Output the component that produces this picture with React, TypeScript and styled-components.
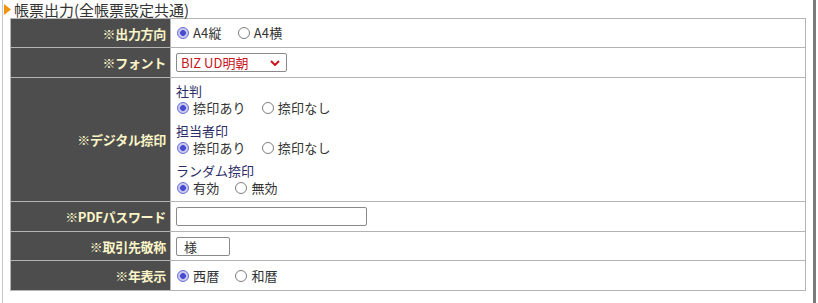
import React from "react";
import styled, { createGlobalStyle } from "styled-components";

const Global = createGlobalStyle`
  html, body { margin: 0; padding: 0; background: #ffffff; }
  body { font-family: "Noto Sans CJK JP", "Noto Sans", sans-serif; color: #333; overflow: hidden; }
`;

const Frame = styled.div`
  margin-left: 2px;
  width: 810px;
  height: 303px;
  border-left: 1px solid #c8c8c8;
  border-right: 3px solid #7a7a7a;
  box-sizing: content-box;
  overflow: hidden;
`;

const Heading = styled.div`
  display: flex;
  align-items: flex-start;
  gap: 3px;
  height: 18px;
  box-sizing: border-box;
  padding: 2px 0 0 1px;
  font-size: 15px;
  line-height: 16px;
  color: #333;
  white-space: nowrap;
`;

const Arrow = styled.svg`
  flex: none;
  width: 7px;
  height: 11px;
  display: block;
  margin-top: 2px;
`;

const Table = styled.div`
  margin-left: 7px;
  width: 796px;
  border: 1px solid #b4b4b4;
  box-sizing: border-box;
  display: flex;
  flex-direction: column;
`;

const Row = styled.div<{ $h: number; $first?: boolean }>`
  display: grid;
  grid-template-columns: 160px 1fr;
  height: ${(p) => p.$h}px;
  box-sizing: border-box;
  border-top: ${(p) => (p.$first ? "none" : "1px solid #b4b4b4")};
`;

const Label = styled.div`
  background: #4d4d4d;
  color: #fbf5c8;
  font-weight: bold;
  font-size: 13px;
  display: flex;
  align-items: center;
  justify-content: flex-end;
  padding-right: 4px;
  border-right: 1px solid #b4b4b4;
  letter-spacing: -0.3px;
`;

const Value = styled.div`
  display: flex;
  flex-direction: column;
  justify-content: center;
  padding-left: 5px;
  font-size: 13px;
`;

const RadioLine = styled.div`
  display: flex;
  align-items: center;
  gap: 15px;
  height: 17px;
`;

const Choice = styled.label`
  display: flex;
  align-items: center;
  gap: 4px;
  color: #333;
  font-size: 13px;
  line-height: 16px;
  letter-spacing: 0.2px;
`;

const Radio = styled.input.attrs({ type: "radio" })`
  appearance: none;
  -webkit-appearance: none;
  margin: 0 0 0 1px;
  width: 12px;
  height: 12px;
  border-radius: 50%;
  border: 1px solid #7d7d7d;
  background: #fff;
  box-sizing: border-box;
  &:checked {
    border-color: #6a6ad8;
    background: radial-gradient(circle, #4b4bd0 0 2.6px, #c9c9f2 3.2px 100%);
  }
`;

const GroupTitle = styled.div`
  color: #2c2c66;
  font-size: 13px;
  line-height: 16px;
  height: 17px;
`;

const Group = styled.div`
  display: flex;
  flex-direction: column;
  & + & {
    margin-top: 6px;
  }
`;

const Select = styled.select`
  appearance: none;
  -webkit-appearance: none;
  width: 111px;
  height: 19px;
  border: 1px solid #8a8a8a;
  border-radius: 2px;
  padding: 0 0 0 4px;
  font-family: inherit;
  font-size: 13px;
  color: #c8161d;
  background: #fff
    url("data:image/svg+xml;utf8,<svg xmlns='http://www.w3.org/2000/svg' width='10' height='6'><path d='M1 1l4 4 4-4' fill='none' stroke='%23c8161d' stroke-width='2'/></svg>")
    no-repeat right 6px center;
  line-height: 17px;
`;

const TextBox = styled.input<{ $w: number }>`
  width: ${(p) => p.$w}px;
  height: 19px;
  box-sizing: border-box;
  border: 1px solid #8a8a8a;
  border-radius: 2px;
  padding: 0 0 0 7px;
  font-family: inherit;
  font-size: 13px;
  color: #333;
  outline: none;
`;

const NextHeading = styled(Heading)`
  margin-top: 9px;
`;

type Opt = { label: string; checked?: boolean };

const Radios: React.FC<{ name: string; options: Opt[] }> = ({ name, options }) => (
  <RadioLine>
    {options.map((o) => (
      <Choice key={o.label}>
        <Radio name={name} defaultChecked={o.checked} />
        {o.label}
      </Choice>
    ))}
  </RadioLine>
);

const Tri = () => (
  <Arrow viewBox="0 0 7 11">
    <path d="M0 0L7 5.5L0 11Z" fill="#f0920c" />
  </Arrow>
);

export default function App() {
  return (
    <>
      <Global />
      <Frame>
        <Heading>
          <Tri />
          帳票出力(全帳票設定共通)
        </Heading>
        <Table>
          <Row $h={28} $first>
            <Label>※出力方向</Label>
            <Value>
              <Radios name="dir" options={[{ label: "A4縦", checked: true }, { label: "A4横" }]} />
            </Value>
          </Row>
          <Row $h={30}>
            <Label>※フォント</Label>
            <Value>
              <Select defaultValue="biz">
                <option value="biz">BIZ UD明朝</option>
                <option value="goth">BIZ UDゴシック</option>
              </Select>
            </Value>
          </Row>
          <Row $h={124}>
            <Label>※デジタル捺印</Label>
            <Value>
              <Group>
                <GroupTitle>社判</GroupTitle>
                <Radios name="s1" options={[{ label: "捺印あり", checked: true }, { label: "捺印なし" }]} />
              </Group>
              <Group>
                <GroupTitle>担当者印</GroupTitle>
                <Radios name="s2" options={[{ label: "捺印あり", checked: true }, { label: "捺印なし" }]} />
              </Group>
              <Group>
                <GroupTitle>ランダム捺印</GroupTitle>
                <Radios name="s3" options={[{ label: "有効", checked: true }, { label: "無効" }]} />
              </Group>
            </Value>
          </Row>
          <Row $h={30}>
            <Label>※PDFパスワード</Label>
            <Value>
              <TextBox $w={191} defaultValue="" />
            </Value>
          </Row>
          <Row $h={29}>
            <Label>※取引先敬称</Label>
            <Value>
              <TextBox $w={54} defaultValue="様" />
            </Value>
          </Row>
          <Row $h={30}>
            <Label>※年表示</Label>
            <Value>
              <Radios name="yr" options={[{ label: "西暦", checked: true }, { label: "和暦" }]} />
            </Value>
          </Row>
        </Table>
        <NextHeading>
          <Tri />
          帳票出力(個別設定)
        </NextHeading>
      </Frame>
    </>
  );
}
